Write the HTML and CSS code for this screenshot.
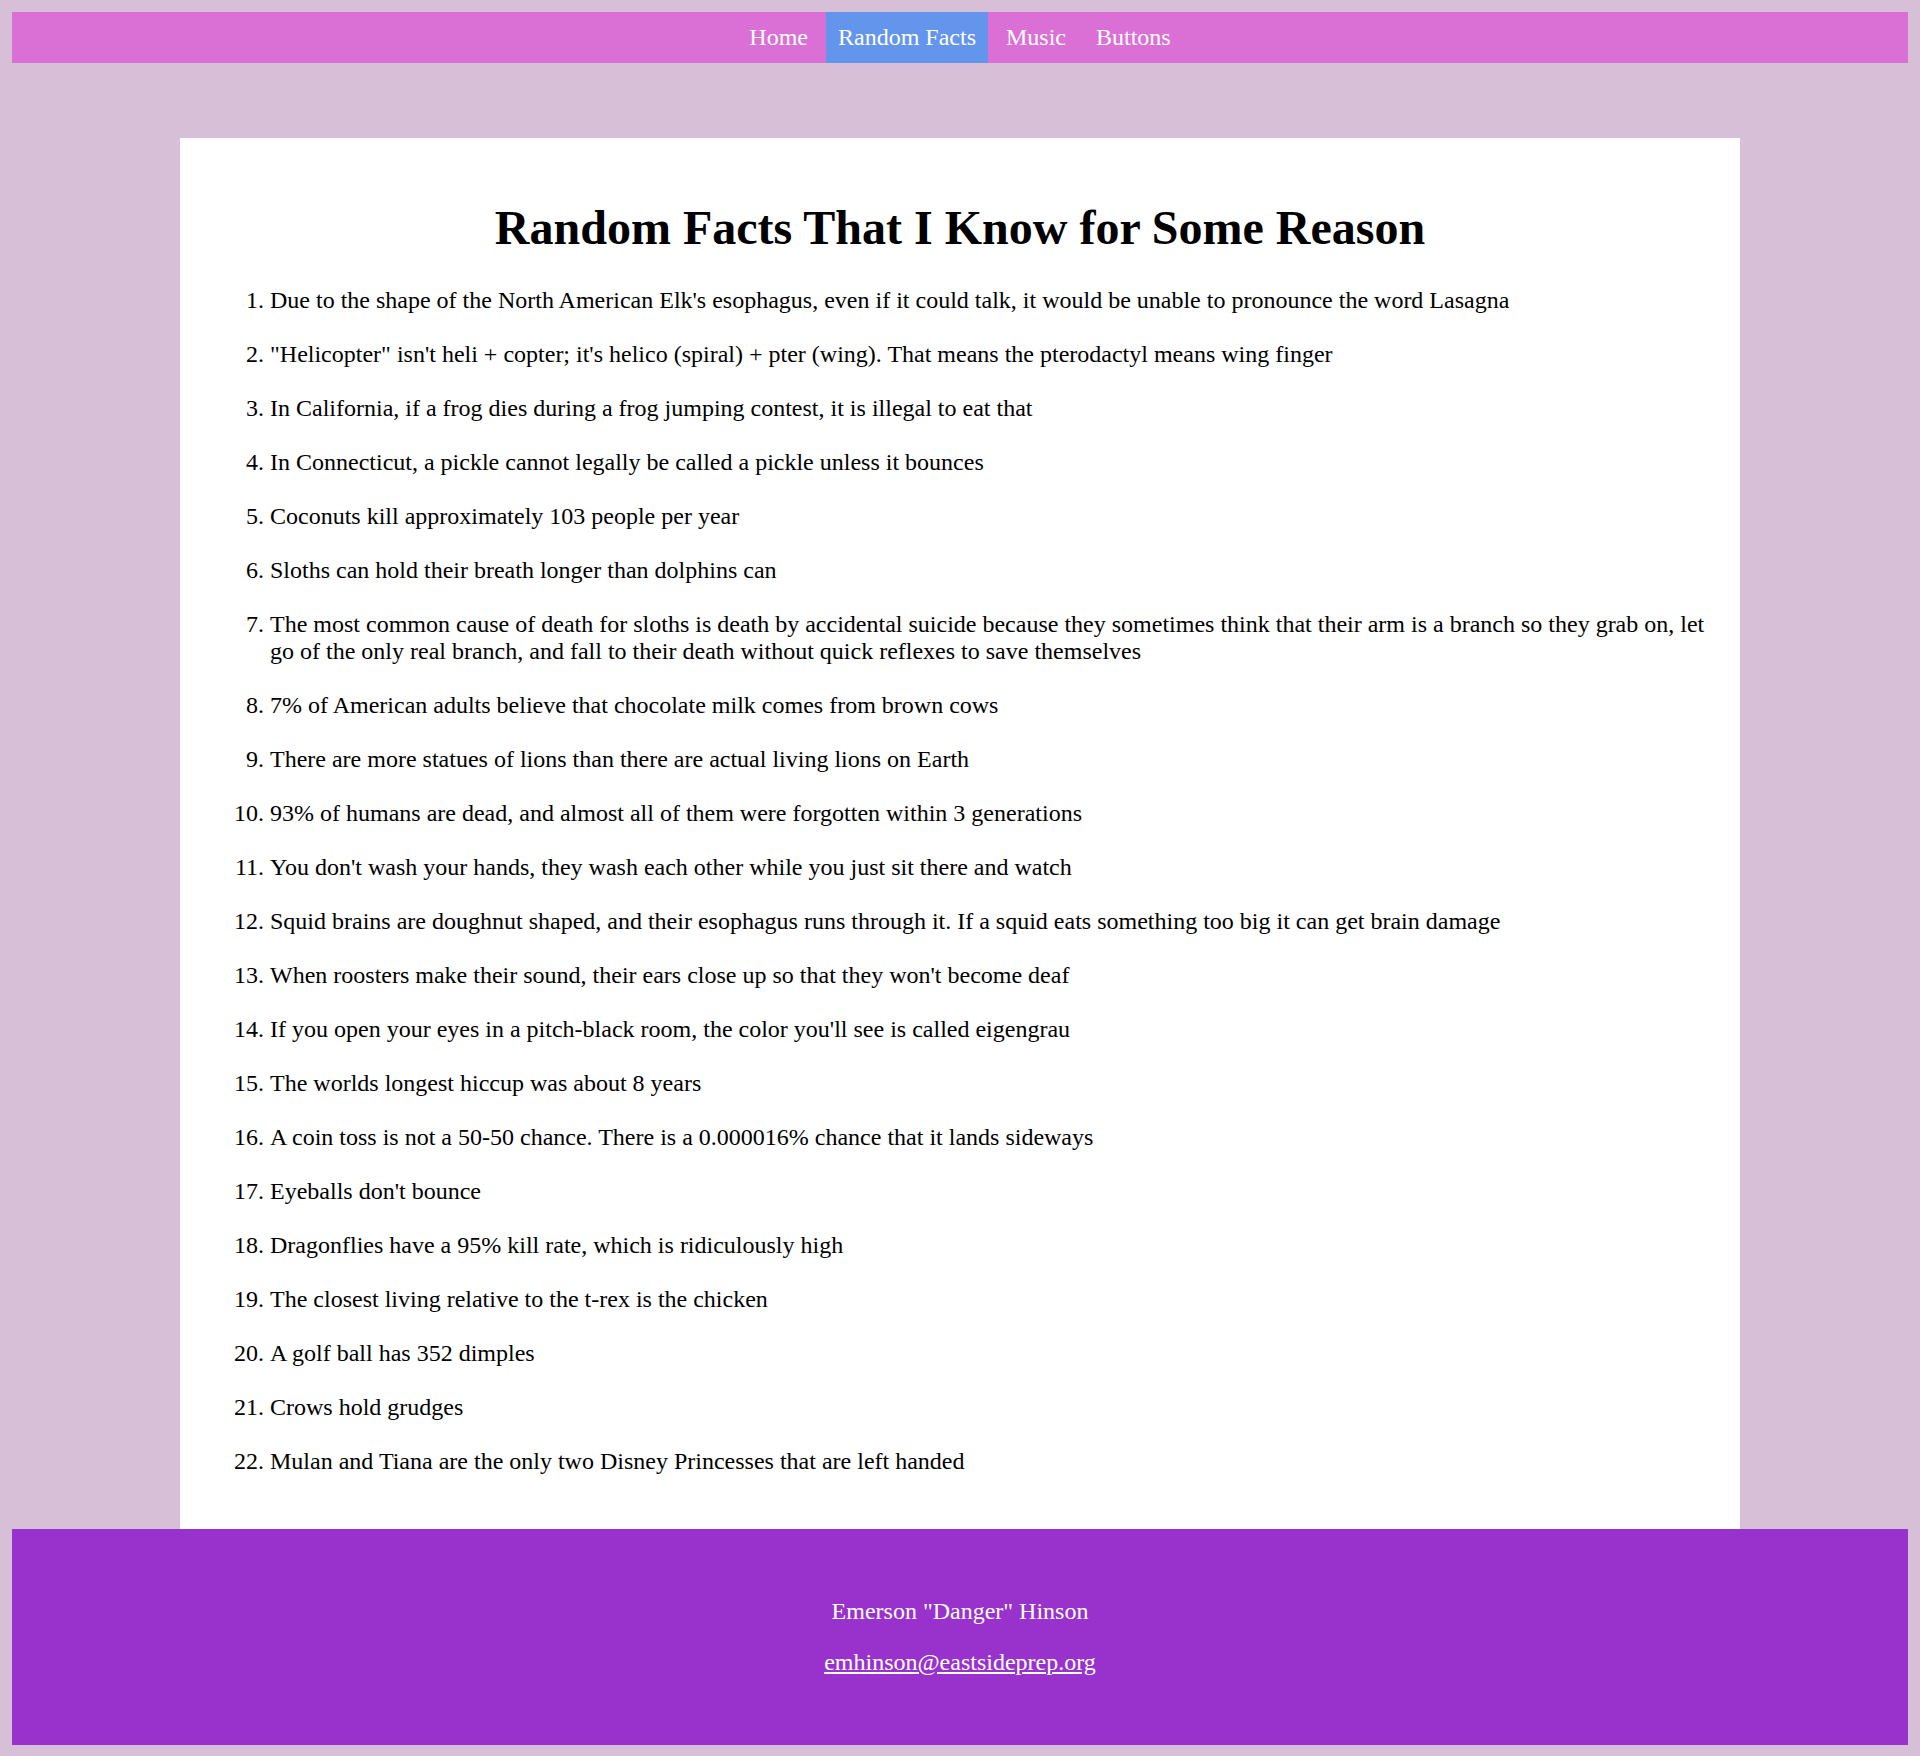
FILE: index.html
```html
<!DOCTYPE html>
<html lang="en">
<head>
<meta charset="utf-8">
<title>Random Facts</title>
<link rel="stylesheet" href="styles.css">
</head>
<body>
<nav class="topnav">
  <ul class="nav-list">
    <li class="nav-item"><a class="nav-link" href="#">Home</a></li>
    <li class="nav-item nav-item-active"><a class="nav-link" href="#">Random Facts</a></li>
    <li class="nav-item"><a class="nav-link" href="#">Music</a></li>
    <li class="nav-item"><a class="nav-link" href="#">Buttons</a></li>
  </ul>
</nav>
<main class="content">
  <h1 class="title">Random Facts That I Know for Some Reason</h1>
  <ol class="facts">
    <li>Due to the shape of the North American Elk's esophagus, even if it could talk, it would be unable to pronounce the word Lasagna</li>
    <li>"Helicopter" isn't heli + copter; it's helico (spiral) + pter (wing). That means the pterodactyl means wing finger</li>
    <li>In California, if a frog dies during a frog jumping contest, it is illegal to eat that</li>
    <li>In Connecticut, a pickle cannot legally be called a pickle unless it bounces</li>
    <li>Coconuts kill approximately 103 people per year</li>
    <li>Sloths can hold their breath longer than dolphins can</li>
    <li>The most common cause of death for sloths is death by accidental suicide because they sometimes think that their arm is a branch so they grab on, let go of the only real branch, and fall to their death without quick reflexes to save themselves</li>
    <li>7% of American adults believe that chocolate milk comes from brown cows</li>
    <li>There are more statues of lions than there are actual living lions on Earth</li>
    <li>93% of humans are dead, and almost all of them were forgotten within 3 generations</li>
    <li>You don't wash your hands, they wash each other while you just sit there and watch</li>
    <li>Squid brains are doughnut shaped, and their esophagus runs through it. If a squid eats something too big it can get brain damage</li>
    <li>When roosters make their sound, their ears close up so that they won't become deaf</li>
    <li>If you open your eyes in a pitch-black room, the color you'll see is called eigengrau</li>
    <li>The worlds longest hiccup was about 8 years</li>
    <li>A coin toss is not a 50-50 chance. There is a 0.000016% chance that it lands sideways</li>
    <li>Eyeballs don't bounce</li>
    <li>Dragonflies have a 95% kill rate, which is ridiculously high</li>
    <li>The closest living relative to the t-rex is the chicken</li>
    <li>A golf ball has 352 dimples</li>
    <li>Crows hold grudges</li>
    <li>Mulan and Tiana are the only two Disney Princesses that are left handed</li>
  </ol>
</main>
<footer class="footer">
  <p class="footer-line">Emerson "Danger" Hinson</p>
  <p class="footer-line"><a class="footer-link" href="#">emhinson@eastsideprep.org</a></p>
</footer>
</body>
</html>
```
FILE: styles.css
```css
html {
  background: #d8bfd8;
}

body {
  margin: 12px;
  background: #d8bfd8;
  color: #000;
  font-family: "Liberation Serif", "Times New Roman", serif;
  font-size: 24px;
}

.topnav {
  background: #da70d6;
}

.nav-list {
  list-style: none;
  margin: 0;
  padding: 0;
  display: flex;
  justify-content: center;
  gap: 6px;
}

.nav-item {
  padding: 12px;
}

.nav-item-active {
  background: #6495ed;
}

.nav-link {
  color: #fff;
  text-decoration: none;
}

.content {
  width: 1560px;
  box-sizing: border-box;
  margin: 75px auto 0;
  padding: 30px;
  background: #fff;
}

.title {
  font-size: 48px;
  font-weight: bold;
  text-align: center;
  margin: 32px 0;
}

.facts {
  margin: 24px 0;
  padding-left: 60px;
}

.facts li + li {
  margin-top: 27px;
}

.footer {
  background: #9932cc;
  color: #fff;
  text-align: center;
  padding: 45px 0;
}

.footer-line {
  margin: 24px 0;
}

.footer-link {
  color: #fff;
  text-decoration: underline;
}
```
